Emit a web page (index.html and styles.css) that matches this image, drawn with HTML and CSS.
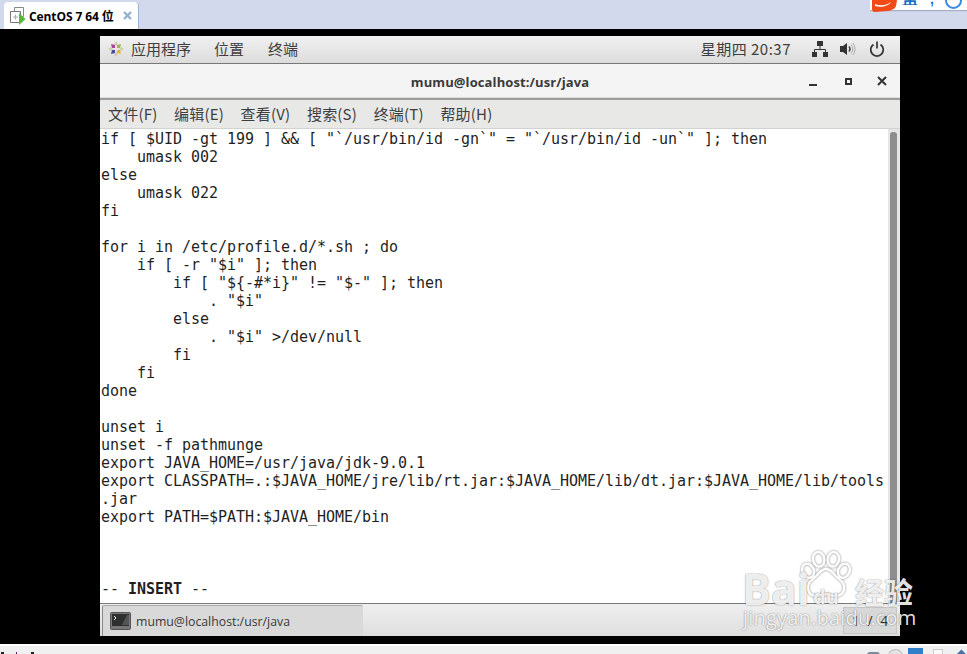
FILE: index.html
```html
<!DOCTYPE html>
<html lang="zh">
<head>
<meta charset="utf-8">
<title>CentOS 7 64 位</title>
<link rel="stylesheet" href="styles.css">
</head>
<body>
<header class="host-tabs">
  <div class="tab">
    <svg class="tab-icon" width="17" height="20" viewBox="0 0 17 20"><path d="M5.500 1.500h9v9h-9z" fill="#fff" stroke="#888"/><path d="M1.500 5.500h10v11h-10z" fill="#fff" stroke="#777"/><path d="M4 11h5M6.500 8.500v5" stroke="#aaa" fill="none"/><path d="M10 7l6.500 6-6.500 6z" fill="#58b83a"/></svg>
    <span class="tab-label">CentOS 7 64 位</span>
    <svg class="tab-close" width="9" height="9" viewBox="0 0 9 9"><path d="M1 1l7 7M8 1l-7 7" stroke="#8fb0cf" stroke-width="2.200"/></svg>
  </div>
</header>
<div class="ime">
  <span class="ime-bar"></span>
  <svg class="ime-logo" width="27" height="12" viewBox="0 0 27 12"><path d="M2 0h25l-1 6c-1 3-4 4-8 5l-13 1c-2 0-3-1-3-3z" fill="#f04a17"/><path d="M5 4c5 2 11 2 16-2-2 4-10 6-16 4z" fill="#fff"/></svg>
  <span class="ime-text">英</span>
  <span class="ime-mark">,</span>
  <span class="ime-ring"></span>
</div>
<main class="stage">
  <section class="guest">
    <div class="panel">
      <svg class="foot" width="16" height="16" viewBox="0 0 16 16"><path d="M3 3l4 1v3H4z" fill="#a9468f"/><path d="M9 4l4-1-1 4H9z" fill="#9bbb4b"/><path d="M9 9h3l1 4-4-1z" fill="#efb040"/><path d="M4 9h3v3l-4 1z" fill="#4a4a9e"/><path d="M6 3l2-3 2 3-2 2zM13 6l3 2-3 2-2-2zM6 13l2 3 2-3-2-2zM3 6L0 8l3 2 2-2z" fill="#c8c79a" opacity=".75"/></svg>
      <span class="panel-item panel-apps">应用程序</span>
      <span class="panel-item panel-places">位置</span>
      <span class="panel-item">终端</span>
      <span class="clock">星期四 20:37</span>
      <svg class="tray-net" width="16" height="16" viewBox="0 0 16 16"><path d="M5 0h6v5H5zM0 11h5v5H0zM11 11h5v5h-5z" fill="#333"/><path d="M8 5v3M2.500 11V8.500h11V11" stroke="#333" fill="none"/></svg>
      <svg class="tray-vol" width="16" height="16" viewBox="0 0 16 16"><path d="M0 5h3l4-3v12l-4-3H0z" fill="#333"/><path d="M9 5.500q2 2.500 0 5" stroke="#444" stroke-width="1.500" fill="none"/><path d="M11 3.500q3.500 4.500 0 9M13 2q4 6 0 12" stroke="#aaa" fill="none"/></svg>
      <svg class="tray-power" width="16" height="16" viewBox="0 0 16 16"><path d="M4.500 3.500a6.300 6.300 0 1 0 7 0" stroke="#333" stroke-width="1.700" fill="none"/><path d="M8 0.500v7" stroke="#333" stroke-width="1.700"/></svg>
    </div>
    <div class="titlebar">
      <span class="title">mumu@localhost:/usr/java</span>
      <div class="win-buttons">
        <span class="win-min"></span>
        <span class="win-max"></span>
        <svg width="10" height="10" viewBox="0 0 10 10"><path d="M1 1l8 8M9 1l-8 8" stroke="#333" stroke-width="2"/></svg>
      </div>
    </div>
    <nav class="menubar">
      <span>文件(F)</span><span>编辑(E)</span><span>查看(V)</span><span>搜索(S)</span><span>终端(T)</span><span>帮助(H)</span>
    </nav>
    <div class="terminal">
      <pre class="screen">if [ $UID -gt 199 ] &amp;&amp; [ "`/usr/bin/id -gn`" = "`/usr/bin/id -un`" ]; then
    umask 002
else
    umask 022
fi

for i in /etc/profile.d/*.sh ; do
    if [ -r "$i" ]; then
        if [ "${-#*i}" != "$-" ]; then
            . "$i"
        else
            . "$i" &gt;/dev/null
        fi
    fi
done

unset i
unset -f pathmunge
export JAVA_HOME=/usr/java/jdk-9.0.1
export CLASSPATH=.:$JAVA_HOME/jre/lib/rt.jar:$JAVA_HOME/lib/dt.jar:$JAVA_HOME/lib/tools
.jar
export PATH=$PATH:$JAVA_HOME/bin



-- <b>INSERT</b> --</pre>
      <div class="scrollbar"><div class="thumb"></div></div>
    </div>
    <footer class="taskbar">
      <div class="task">
        <svg width="21" height="18" viewBox="0 0 21 18"><rect x="0.500" y="0.500" width="20" height="17" rx="1" fill="#777" stroke="#555"/><rect x="2" y="2" width="17" height="12" fill="#2e3030"/><path d="M4 4l2 2-2 2" stroke="#eee" fill="none"/><path d="M12 13l5-10h2v10z" fill="#555"/></svg>
        <span>mumu@localhost:/usr/java</span>
      </div>
      <div class="pager">1 / 4</div>
    </footer>
  </section>
</main>
<div class="host-status">
  <i class="mark mark-a"></i><i class="mark mark-b"></i><i class="mark mark-c"></i>
  <i class="st st-a"></i><i class="st st-b"></i><i class="st st-c"></i><i class="st st-d"></i><i class="st st-e"></i>
</div>
<div class="watermark">
  <svg class="paw" width="52" height="54" viewBox="0 0 64 66"><g fill="none" stroke="#fff" stroke-width="3"><ellipse cx="23" cy="10" rx="7" ry="9" transform="rotate(-10 23 10)"/><ellipse cx="41" cy="10" rx="7" ry="9" transform="rotate(10 41 10)"/><ellipse cx="10" cy="24" rx="7" ry="9" transform="rotate(-25 10 24)"/><ellipse cx="54" cy="24" rx="7" ry="9" transform="rotate(25 54 24)"/><path d="M32 22c7 0 10 8 17 13 8 6 7 18-3 20-6 1-9-2-14-2s-8 3-14 2C8 53 7 41 15 35c7-5 10-13 17-13z"/></g></svg>
  <span class="wm-bai">Bai</span><span class="wm-du">du</span><span class="wm-cn">经验</span>
  <span class="wm-url">jingyan.baidu.com</span>
</div>
</body>
</html>
```
FILE: styles.css
```css
* { box-sizing: border-box; }
html, body { margin: 0; padding: 0; }
body {
  width: 967px;
  height: 654px;
  overflow: hidden;
  display: flex;
  flex-direction: column;
  position: relative;
  background: #000;
  font-family: "Noto Sans CJK SC", sans-serif;
}
.host-tabs {
  height: 29px;
  flex: none;
  background: #d3d9ec;
  padding: 2px 0 0 4px;
}
.tab {
  width: 135px;
  height: 27px;
  background: #fff;
  border-right: 1px solid #9db4d0;
  border-radius: 4px 4px 0 0;
  display: flex;
  align-items: center;
  padding-left: 5px;
}
.tab-label {
  margin-left: 3px;
  font: bold 12px "Open Sans", "Noto Sans CJK SC", sans-serif;
  letter-spacing: -.1px;
  color: #000;
  width: 94px;
  white-space: nowrap;
}
.ime {
  position: absolute;
  top: 0;
  left: 870px;
  width: 97px;
  height: 12px;
  overflow: hidden;
}
.ime-bar {
  position: absolute;
  left: 0;
  top: 0;
  width: 97px;
  height: 10px;
  background: #fff;
  box-shadow: 0 1px 1px rgba(120, 130, 160, .5);
}
.ime-logo { position: absolute; left: 0; top: 0; }
.ime-text {
  position: absolute;
  left: 32px;
  top: -7px;
  font-size: 16px;
  line-height: 18px;
  font-weight: 700;
  color: #1b6fc4;
  height: 18px;
  clip-path: inset(0 0 6px 0);
}
.ime-mark {
  position: absolute;
  left: 60px;
  top: -8px;
  font: 700 14px/14px "Liberation Sans", sans-serif;
  color: #1b6fc4;
}
.ime-ring {
  position: absolute;
  left: 75px;
  top: -8px;
  width: 17px;
  height: 17px;
  border: 2px solid #3a8be0;
  border-radius: 50%;
}
.stage {
  height: 615px;
  flex: none;
  padding: 7px 0 0 100px;
  background: #000;
}
.guest {
  width: 800px;
  height: 600px;
  display: flex;
  flex-direction: column;
  background: #fff;
}
.panel {
  height: 28px;
  flex: none;
  display: flex;
  align-items: center;
  padding: 0 0 2px 8px;
  background: linear-gradient(#f1f1f1, #dcdcdc);
  border-bottom: 1px solid #777;
  color: #3e3e3e;
  font-size: 15px;
}
.foot { flex: none; }
.panel-item { line-height: 24px; }
.panel-apps { margin-left: 7px; margin-right: 23px; }
.panel-places { margin-right: 24px; }
.clock {
  margin-left: auto;
  margin-right: 21px;
  letter-spacing: .5px;
}
.tray-vol { margin: 0 13px 0 12px; }
.tray-power { margin-right: 15px; }
.titlebar {
  height: 36px;
  flex: none;
  position: relative;
  display: flex;
  align-items: center;
  justify-content: flex-end;
  background: #f4f4f4;
  border-bottom: 2px solid #9c9c9c;
  box-shadow: inset 0 -1px 0 #ddd;
}
.title {
  position: absolute;
  left: 0;
  right: 0;
  margin-top: 1px;
  text-align: center;
  font: 700 13px "Open Sans", sans-serif;
  letter-spacing: .1px;
  color: #3a3a3a;
}
.win-buttons {
  display: flex;
  align-items: center;
  gap: 24px;
  padding-right: 13px;
}
.win-min { width: 8px; height: 2px; background: #333; margin-top: 7px; }
.win-max { width: 7px; height: 7px; border: 2px solid #333; margin-left: 4px; margin-right: 1px; }
.menubar {
  height: 29px;
  flex: none;
  display: flex;
  align-items: center;
  gap: 16.600px;
  padding: 0 0 2px 8px;
  background: #e8e8e7;
  border-bottom: 1px solid #d2d2d2;
  font-size: 15px;
  letter-spacing: .2px;
  color: #3e3e3e;
}
.terminal {
  height: 474px;
  flex: none;
  display: flex;
  background: #fff;
}
.screen {
  flex: 1;
  margin: 0;
  padding: 1px 0 0 1px;
  font: 15px/18px "DejaVu Sans Mono", monospace;
  letter-spacing: -0.03px;
  color: #1f1f1f;
  white-space: pre;
  overflow: hidden;
}
.scrollbar {
  width: 12px;
  flex: none;
  padding: 3px 3px 0 2px;
  background: #e6e6e6;
}
.thumb {
  height: 100%;
  background: #8d8d8d;
  border-radius: 3px 3px 0 0;
}
.taskbar {
  height: 33px;
  flex: none;
  display: flex;
  align-items: stretch;
  justify-content: space-between;
  padding-left: 2px;
  background: linear-gradient(#efefef, #dedede);
  border-top: 1px solid #777;
}
.task {
  width: 261px;
  display: flex;
  align-items: center;
  gap: 5px;
  padding-left: 7px;
  margin-top: 1px;
  background: #d9d9d9;
  border-left: 1px solid #8a8a8a;
  border-top: 1px solid #aaa;
  border-radius: 2px 2px 0 0;
  font: 12.300px "Open Sans", sans-serif;
  color: #3a3a3a;
}
.pager {
  width: 54px;
  height: 27px;
  margin: 3px 3px 0 0;
  background: #d8d8d8;
  border: 1px solid #c6c6c6;
  font: 14px/25px "Open Sans", sans-serif;
  word-spacing: 4px;
  color: #333;
  text-align: center;
}
.host-status {
  height: 10px;
  flex: none;
  display: flex;
  padding: 3px 2px 0 0;
  background: #f0f0f0;
  border-top: 2px solid #fff;
  overflow: hidden;
}
.mark { display: block; flex: none; width: 3px; height: 3px; margin-top: 3px; background: #222; }
.mark-a { margin-left: 1px; }
.mark-b { margin-left: 12px; width: 1px; background: #601a70; }
.mark-c { margin-left: 14px; }
.st { display: block; height: 14px; flex: none; }
.st-a { width: 13px; margin-left: auto; margin-top: 3px; background: #7d8a9a; border-radius: 3px; }
.st-b { width: 15px; margin-left: 8px; background: #e4e4e4; border: 1px solid #bbb; border-radius: 50%; }
.st-c { width: 15px; margin-left: 5px; margin-top: -1px; background: #2f7fc9; }
.st-d { width: 10px; margin-left: 10px; background: #fafafa; border: 1px solid #ccc; }
.st-e { width: 10px; margin-left: 12px; margin-top: 2px; background: #4b6f9e; transform: rotate(45deg); }
.watermark {
  position: absolute;
  left: 740px;
  top: 548px;
  width: 180px;
  height: 90px;
  color: rgba(255, 255, 255, .9);
  text-shadow: 0 0 1.500px rgba(0, 0, 0, .55);
  pointer-events: none;
}
.paw { position: absolute; left: 60px; top: 3px; opacity: .9; filter: drop-shadow(0 0 1px rgba(0, 0, 0, .55)); }
.watermark span { position: absolute; white-space: nowrap; }
.wm-bai { left: 2px; top: 18px; font: 700 43px/46px "Open Sans", sans-serif; }
.wm-du { left: 73px; top: 37px; font: 700 20px/24px "Open Sans", sans-serif; }
.wm-cn { left: 115px; top: 25px; font: 700 29px/36px "Noto Sans CJK SC", sans-serif; }
.wm-url { left: 3px; top: 58px; font: 400 20px/24px "Open Sans", sans-serif; letter-spacing: .2px; }
```
